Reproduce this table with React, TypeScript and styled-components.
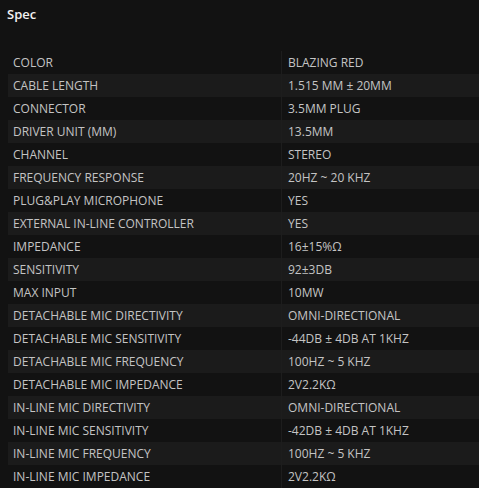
import styled, { createGlobalStyle } from 'styled-components'

const specs: [string, string][] = [
    ['COLOR', 'BLAZING RED'],
    ['CABLE LENGTH', '1.515 MM ± 20MM'],
    ['CONNECTOR', '3.5MM PLUG'],
    ['DRIVER UNIT (MM)', '13.5MM'],
    ['CHANNEL', 'STEREO'],
    ['FREQUENCY RESPONSE', '20HZ ~ 20 KHZ'],
    ['PLUG&PLAY MICROPHONE', 'YES'],
    ['EXTERNAL IN-LINE CONTROLLER', 'YES'],
    ['IMPEDANCE', '16±15%Ω'],
    ['SENSITIVITY', '92±3DB'],
    ['MAX INPUT', '10MW'],
    ['DETACHABLE MIC DIRECTIVITY', 'OMNI-DIRECTIONAL'],
    ['DETACHABLE MIC SENSITIVITY', '-44DB ± 4DB AT 1KHZ'],
    ['DETACHABLE MIC FREQUENCY', '100HZ ~ 5 KHZ'],
    ['DETACHABLE MIC IMPEDANCE', '2V2.2KΩ'],
    ['IN-LINE MIC DIRECTIVITY', 'OMNI-DIRECTIONAL'],
    ['IN-LINE MIC SENSITIVITY', '-42DB ± 4DB AT 1KHZ'],
    ['IN-LINE MIC FREQUENCY', '100HZ ~ 5 KHZ'],
    ['IN-LINE MIC IMPEDANCE', '2V2.2KΩ'],
]

export default function App() {
    return (
        <>
            <GlobalStyle />
            <Panel>
                <Title>Spec</Title>
                <Table>
                    {specs.map(([label, value], i) => (
                        <Row key={label} $striped={i % 2 === 1}>
                            <Cell>{label}</Cell>
                            <Cell $value>{value}</Cell>
                        </Row>
                    ))}
                </Table>
            </Panel>
        </>
    )
}

const GlobalStyle = createGlobalStyle`
    html, body {
        margin: 0;
        background: #121212;
        overflow: hidden;
    }
`

const Panel = styled.div`
    width: 479px;
    height: 488px;
    background: #121212;
    font-family: "Open Sans", "Noto Sans", sans-serif;
    box-sizing: border-box;
    padding-left: 8px;
`

const Title = styled.h2`
    height: 51px;
    margin: 0 0 0 -1px;
    padding-top: 6px;
    font-size: 13px;
    font-weight: 600;
    color: #f2f2f2;
    line-height: 17px;
    box-sizing: border-box;
`

const Table = styled.div`
    display: flex;
    flex-direction: column;
`

const Row = styled.div<{ $striped: boolean }>`
    display: grid;
    grid-template-columns: 273px 1fr;
    height: 23px;
    background: ${p => (p.$striped ? '#1b1b1b' : 'transparent')};
`

const Cell = styled.div<{ $value?: boolean }>`
    display: flex;
    align-items: center;
    padding-left: ${p => (p.$value ? '6px' : '5px')};
    font-size: 12px;
    color: #c4c4c4;
    white-space: nowrap;
    border-left: ${p => (p.$value ? '1px solid #1d1d1d' : 'none')};
`
